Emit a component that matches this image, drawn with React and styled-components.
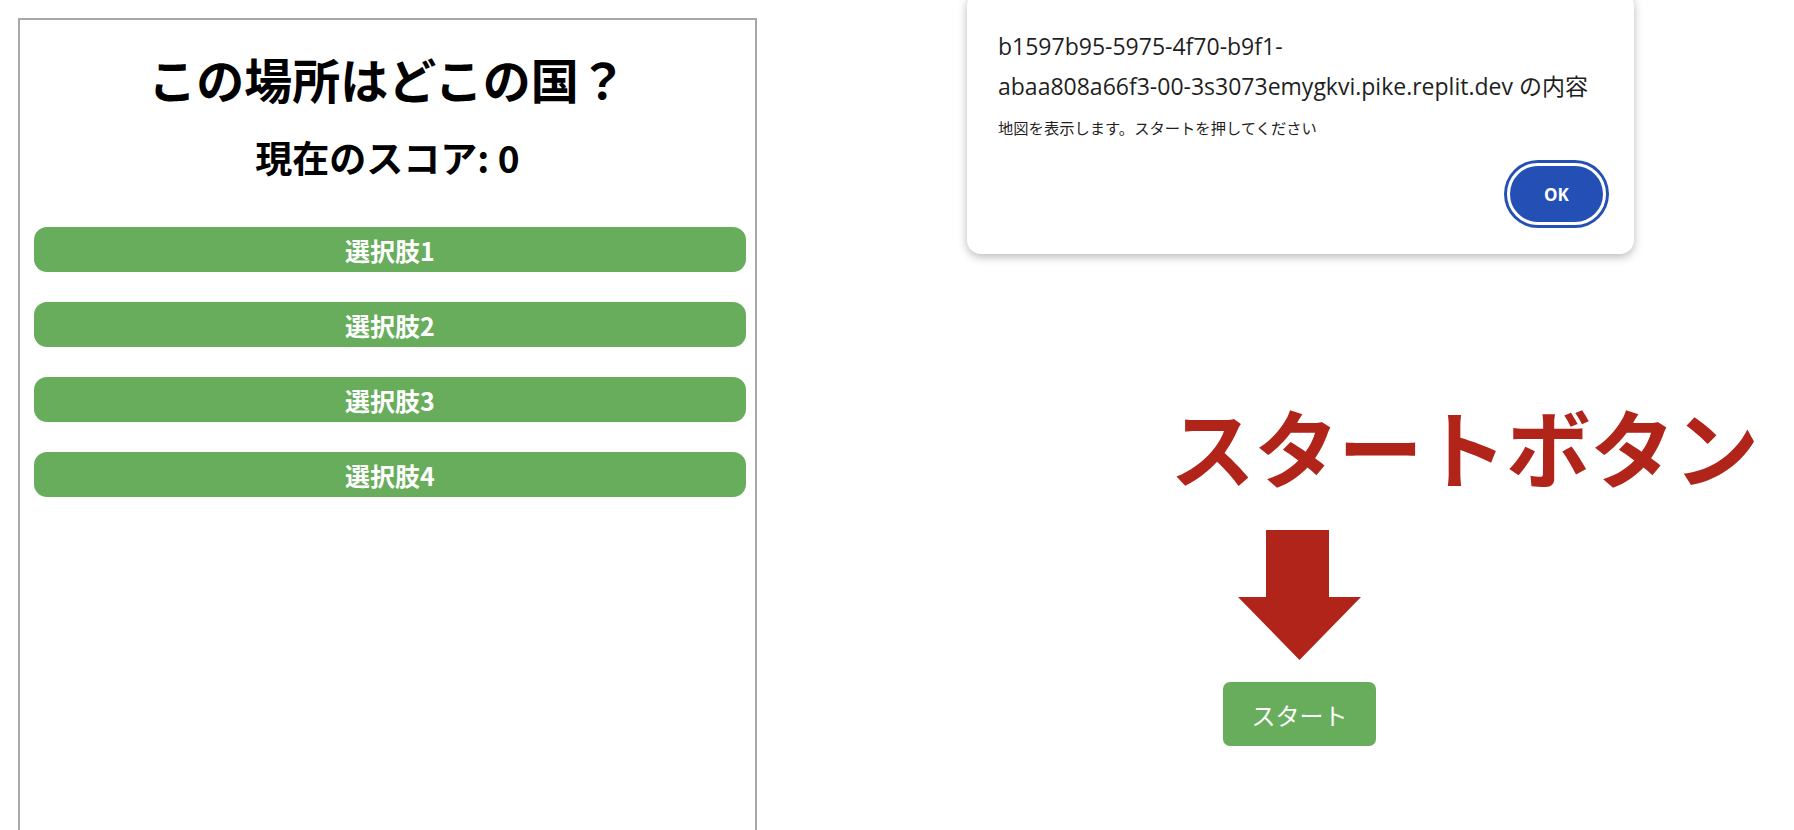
import styled, { createGlobalStyle } from "styled-components"

const Global = createGlobalStyle`
    html, body {
        margin: 0;
        padding: 0;
        background: #fff;
    }
    body {
        font-family: "Noto Sans CJK JP", "Noto Sans", sans-serif;
    }
`

const Page = styled.div`
    display: flex;
    align-items: flex-start;
    height: 830px;
    overflow: hidden;
    padding: 18px 0 0 18px;
    box-sizing: border-box;
`

const Panel = styled.section`
    width: 739px;
    height: 900px;
    flex-shrink: 0;
    border: 2px solid #a8a8a8;
    box-sizing: border-box;
    display: flex;
    flex-direction: column;
    align-items: stretch;
`

const Title = styled.h1`
    margin: 30px 0 0;
    font-size: 48px;
    line-height: 56px;
    font-weight: 700;
    text-align: center;
    color: #000;
`

const Score = styled.h2`
    margin: 30px 0 0;
    font-size: 37px;
    line-height: 42px;
    font-weight: 700;
    text-align: center;
    color: #000;
`

const Choices = styled.div`
    display: flex;
    flex-direction: column;
    gap: 30px;
    margin: 49px 9px 0 14px;
`

const Choice = styled.button`
    height: 45px;
    border: none;
    border-radius: 13px;
    background: #67ad5b;
    color: #fff;
    font-family: "Noto Sans CJK JP", sans-serif;
    font-size: 25px;
    font-weight: 700;
    cursor: pointer;
`

const Side = styled.div`
    display: flex;
    flex-direction: column;
    align-items: flex-start;
    margin: -26px 0 0 210px;
`

const Dialog = styled.div`
    width: 667px;
    height: 262px;
    box-sizing: border-box;
    padding: 34px 28px 0 31px;
    background: #fff;
    border-radius: 14px;
    box-shadow: 0 3px 10px rgba(0, 0, 0, 0.28);
    display: flex;
    flex-direction: column;
`

const Origin = styled.div`
    font-family: "Open Sans", "Noto Sans CJK JP", sans-serif;
    font-size: 23px;
    line-height: 40px;
    color: #1f1f1f;
`

const Message = styled.div`
    margin-top: 9px;
    font-family: "Noto Sans CJK JP", sans-serif;
    font-size: 15.3px;
    line-height: 24px;
    color: #1f1f1f;
`

const Actions = styled.div`
    display: flex;
    justify-content: flex-end;
    margin-top: 24px;
`

const OkButton = styled.button`
    width: 99px;
    height: 62px;
    border-radius: 31px;
    border: 3px solid #fff;
    background: #2450b5;
    box-shadow: 0 0 0 3px #2450b5;
    color: #fff;
    font-family: "Open Sans", sans-serif;
    font-size: 17px;
    font-weight: 700;
`

const Callout = styled.div`
    display: flex;
    flex-direction: column;
    align-items: flex-start;
    margin: 146px 0 0 203px;
`

const Label = styled.div`
    font-family: "Noto Sans CJK JP", sans-serif;
    font-size: 85px;
    line-height: 90px;
    font-weight: 700;
    letter-spacing: -1px;
    color: #b0241a;
    white-space: nowrap;
`

const Pointer = styled.div`
    display: flex;
    flex-direction: column;
    align-items: center;
    width: 153px;
    margin: 40px 0 0 53px;
`

const StartButton = styled.button`
    margin-top: 22px;
    width: 153px;
    height: 64px;
    border: none;
    border-radius: 7px;
    background: #67ad5b;
    color: #fff;
    font-family: "Noto Sans CJK JP", sans-serif;
    font-size: 24px;
    font-weight: 400;
`

const Arrow = () => (
    <svg width="123" height="130" viewBox="0 0 123 130">
        <polygon points="28,0 91,0 91,67 123,67 61.5,130 0,67 28,67" fill="#b0241a" />
    </svg>
)

export default function App() {
    const choices = ["選択肢1", "選択肢2", "選択肢3", "選択肢4"]
    return (
        <>
            <Global />
            <Page>
                <Panel>
                    <Title>この場所はどこの国？</Title>
                    <Score>現在のスコア: 0</Score>
                    <Choices>
                        {choices.map((c) => (
                            <Choice key={c}>{c}</Choice>
                        ))}
                    </Choices>
                </Panel>
                <Side>
                    <Dialog>
                        <Origin>
                            b1597b95-5975-4f70-b9f1-
                            <br />
                            abaa808a66f3-00-3s3073emygkvi.pike.replit.dev の内容
                        </Origin>
                        <Message>地図を表示します。スタートを押してください</Message>
                        <Actions>
                            <OkButton>OK</OkButton>
                        </Actions>
                    </Dialog>
                    <Callout>
                        <Label>スタートボタン</Label>
                        <Pointer>
                            <Arrow />
                            <StartButton>スタート</StartButton>
                        </Pointer>
                    </Callout>
                </Side>
            </Page>
        </>
    )
}
